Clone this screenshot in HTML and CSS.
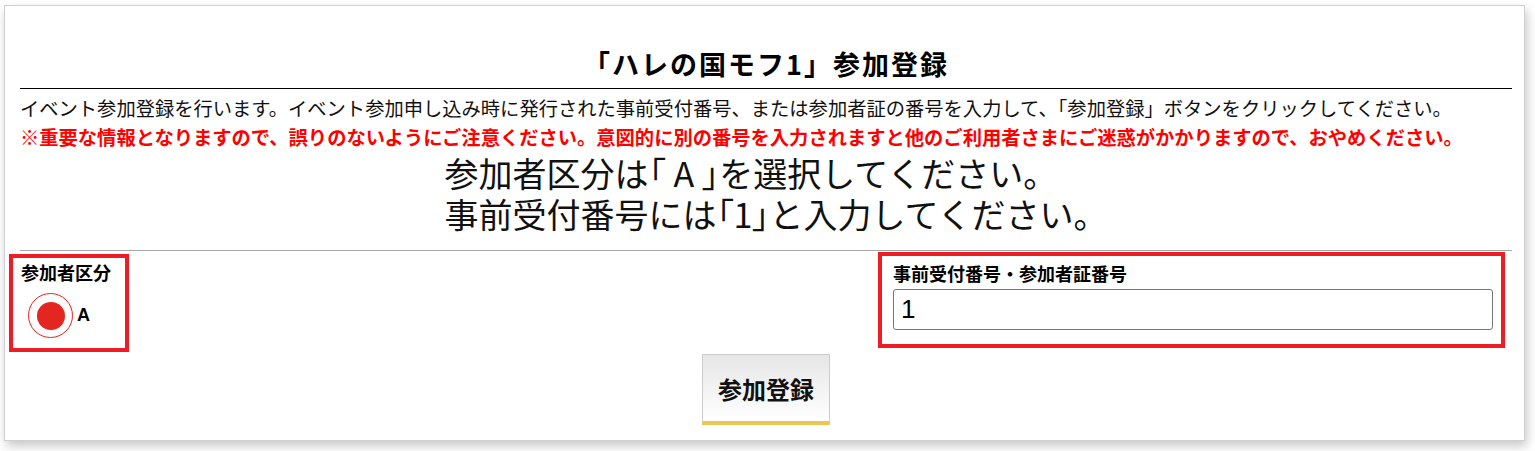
FILE: index.html
```html
<!DOCTYPE html>
<html>
    <head>
        <meta charset="utf-8">
        <title>「ハレの国モフ1」参加登録</title>
        <link rel="stylesheet" href="styles.css">
    </head>
    <body>
        <div id="card">
            <h1 id="title">「ハレの国モフ1」参加登録</h1>
            <p class="lead">イベント参加登録を行います。イベント参加申し込み時に発行された事前受付番号、または参加者証の番号を入力して、「参加登録」ボタンをクリックしてください。</p>
            <p class="lead warn">※重要な情報となりますので、誤りのないようにご注意ください。意図的に別の番号を入力されますと他のご利用者さまにご迷惑がかかりますので、おやめください。</p>
            <div id="guide">
                <div class="guide-text">
                    <div>参加者区分は<span class="br">「<span class="wide">A</span>」</span>を選択してください。</div>
                    <div>事前受付番号には<span class="br">「1」</span>と入力してください。</div>
                </div>
            </div>
            <div id="form">
                <div class="field kubun">
                    <div class="label">参加者区分</div>
                    <label class="radio">
                        <span class="ring"><span class="dot"></span></span>
                        <span class="radio-text">A</span>
                    </label>
                </div>
                <div class="field number">
                    <div class="label">事前受付番号・参加者証番号</div>
                    <input type="text" class="num-input" value="1">
                </div>
            </div>
            <div class="actions">
                <button id="submit">参加登録</button>
            </div>
        </div>
    </body>
</html>
```

FILE: styles.css
```css
html, body {
    height: 100%;
}
body {
    background-color: white;
    margin: 0;
    font-family: "Noto Sans CJK JP", "Noto Sans", sans-serif;
    color: #111;
    overflow: hidden;
}

#card {
    margin: 5px 10px 0 4px;
    padding: 0 12px 15px 15px;
    background: white;
    border: 1px solid #cfcfcf;
    box-shadow: 2px 5px 10px rgba(0, 0, 0, 0.22);
}

#title {
    margin: 0;
    padding: 39px 0 6px;
    font-size: 27px;
    font-weight: bold;
    line-height: 37px;
    letter-spacing: 2px;
    text-align: center;
    color: #000;
    border-bottom: 1px solid #000;
}

.lead {
    margin: 0;
    font-size: 19.3px;
    line-height: 29px;
    white-space: nowrap;
}
.lead:first-of-type {
    margin-top: 5px;
}
.warn {
    color: #ff0000;
    font-weight: bold;
}

#guide {
    text-align: center;
    padding-bottom: 16px;
    border-bottom: 1px solid #a8a8a8;
}
.guide-text {
    display: inline-block;
    padding-left: 20px;
    text-align: left;
    font-size: 34px;
    line-height: 41px;
    color: #111;
}
.guide-text .br {
    font-feature-settings: "palt";
}
.guide-text .wide {
    margin: 0 8px;
}

#form {
    display: flex;
    justify-content: space-between;
    align-items: flex-start;
    margin: 1px 7px 0 -11px;
}
.field {
    border: 4px solid #ee1c25;
}
.label {
    font-size: 18px;
    font-weight: bold;
    line-height: 27px;
    color: #000;
}

.kubun {
    margin-top: 2px;
    padding: 1px 0 10px 8px;
    width: 104px;
}
.radio {
    display: flex;
    align-items: center;
    margin: 7px 0 0 7px;
}
.ring {
    display: flex;
    align-items: center;
    justify-content: center;
    width: 43px;
    height: 43px;
    border: 1.5px solid #e3261f;
    border-radius: 50%;
}
.dot {
    width: 28px;
    height: 28px;
    border-radius: 50%;
    background: #e3261f;
}
.radio-text {
    margin-left: 4px;
    font-family: "Liberation Sans", Arial, sans-serif;
    font-size: 18px;
    font-weight: bold;
    color: #000;
}

.number {
    width: 600px;
    padding: 4px 8px 14px 11px;
}
.num-input {
    display: block;
    width: 100%;
    height: 41px;
    margin-top: 2px;
    box-sizing: border-box;
    padding: 0 7px;
    border: 1px solid #777;
    border-radius: 3px;
    font-family: "Liberation Sans", Arial, sans-serif;
    font-size: 26px;
    color: #000;
}

.actions {
    display: flex;
    justify-content: center;
    margin-top: 2px;
}
#submit {
    width: 128px;
    height: 71px;
    border: 1px solid #cccccc;
    border-bottom: 4px solid #ecc64e;
    background: linear-gradient(#e6e6e6, #ffffff);
    font-family: "Noto Sans CJK JP", sans-serif;
    font-size: 24px;
    font-weight: bold;
    color: #111;
    cursor: pointer;
}
```
